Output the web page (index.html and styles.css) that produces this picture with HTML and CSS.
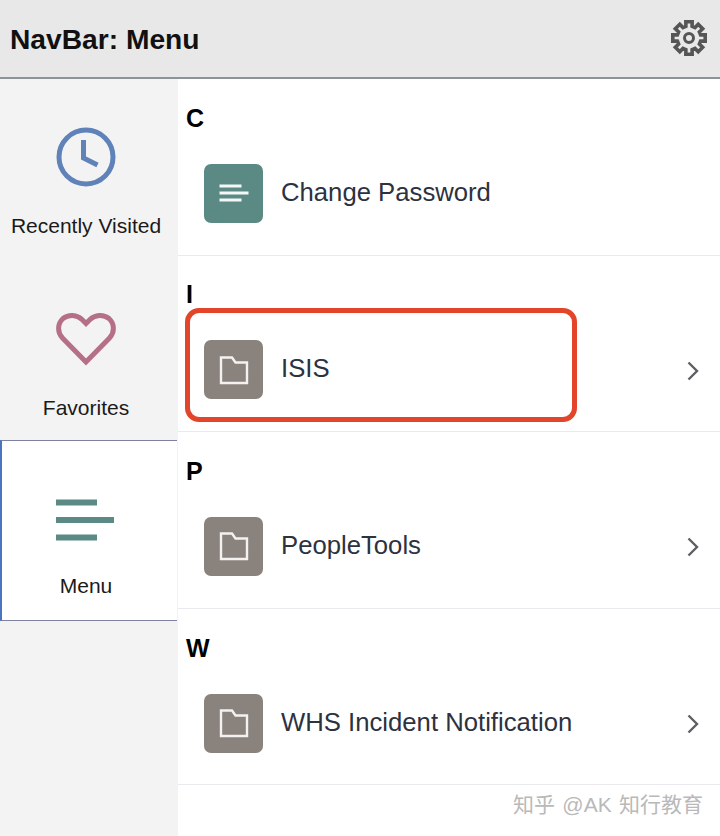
FILE: index.html
```html
<!DOCTYPE html>
<html lang="en">
<head>
<meta charset="utf-8">
<title>NavBar: Menu</title>
<link rel="stylesheet" href="styles.css">
</head>
<body>
<div class="page">
  <header class="topbar">
    <h1 class="title">NavBar: Menu</h1>
    <svg class="gear" viewBox="0 0 36 36" aria-hidden="true">
      <path class="gear-body" d="M14.89 6.41 14.85 1.8H21.15L21.11 6.41 24 7.61 27.23 4.32 31.68 8.77 28.39 12 29.59 14.89 34.2 14.85V21.15L29.59 21.11 28.39 24 31.68 27.23 27.23 31.68 24 28.39 21.11 29.59 21.15 34.2H14.85L14.89 29.59 12 28.39 8.77 31.68 4.32 27.23 7.61 24 6.41 21.11 1.8 21.15V14.85L6.41 14.89 7.61 12 4.32 8.77 8.77 4.32 12 7.61z"/>
      <circle class="gear-hole" cx="18" cy="18" r="4.500"/>
    </svg>
  </header>
  <div class="body">
    <nav class="side">
      <div class="side-item">
        <svg class="side-icon" viewBox="0 0 60 60" aria-hidden="true">
          <circle class="clock" cx="30" cy="30" r="27"/>
          <path class="clock" d="M27.500 13v18l14 7"/>
        </svg>
        <span class="side-label">Recently Visited</span>
      </div>
      <div class="side-item">
        <svg class="side-icon" viewBox="0 0 60 60" aria-hidden="true">
          <path class="heart" d="M30 52 6.500 28C1 22 1.500 13.500 7 8.500c5.500-4.500 14-4 19 1l4 4 4-4c5-5 13.500-5.500 19-1 5.500 5 6 13.500.5 19.500z"/>
        </svg>
        <span class="side-label">Favorites</span>
      </div>
      <div class="side-item is-active">
        <svg class="side-icon" viewBox="0 0 60 60" aria-hidden="true">
          <path class="bars" d="M0 12.500h41M0 30h58M0 47.500h41"/>
        </svg>
        <span class="side-label">Menu</span>
      </div>
    </nav>
    <main class="list">
      <section class="group">
        <h2 class="letter">C</h2>
        <div class="row">
          <span class="tile tile-green">
            <svg class="tile-icon" viewBox="0 0 30 30" aria-hidden="true"><path class="lines" d="M.5 8h22M.5 15h29M.5 22h22"/></svg>
          </span>
          <span class="row-text">Change Password</span>
        </div>
      </section>
      <section class="group">
        <h2 class="letter">I</h2>
        <div class="row">
          <span class="tile tile-grey">
            <svg class="tile-icon" viewBox="0 0 30 30" aria-hidden="true"><path class="folder" d="M2 2.500h11l3.500 5H28v20.500H2z"/></svg>
          </span>
          <span class="row-text">ISIS</span>
          <svg class="chev" viewBox="0 0 12 20" aria-hidden="true"><path d="M1.500 1.500 10 10l-8.500 8.500"/></svg>
        </div>
      </section>
      <section class="group">
        <h2 class="letter">P</h2>
        <div class="row">
          <span class="tile tile-grey">
            <svg class="tile-icon" viewBox="0 0 30 30" aria-hidden="true"><path class="folder" d="M2 2.500h11l3.500 5H28v20.500H2z"/></svg>
          </span>
          <span class="row-text">PeopleTools</span>
          <svg class="chev" viewBox="0 0 12 20" aria-hidden="true"><path d="M1.500 1.500 10 10l-8.500 8.500"/></svg>
        </div>
      </section>
      <section class="group">
        <h2 class="letter">W</h2>
        <div class="row">
          <span class="tile tile-grey">
            <svg class="tile-icon" viewBox="0 0 30 30" aria-hidden="true"><path class="folder" d="M2 2.500h11l3.500 5H28v20.500H2z"/></svg>
          </span>
          <span class="row-text">WHS Incident Notification</span>
          <svg class="chev" viewBox="0 0 12 20" aria-hidden="true"><path d="M1.500 1.500 10 10l-8.500 8.500"/></svg>
        </div>
      </section>
    </main>
  </div>
  <div class="highlight"></div>
  <div class="watermark">知乎 @AK 知行教育</div>
</div>
</body>
</html>
```
FILE: styles.css
```css
* { box-sizing: border-box; }
html, body { margin: 0; padding: 0; }
body {
  font-family: "Liberation Sans", Arial, "Noto Sans CJK SC", sans-serif;
  background: #fff;
}
.page {
  position: relative;
  width: 720px;
  height: 836px;
  overflow: hidden;
  display: flex;
  flex-direction: column;
}
.topbar {
  height: 79px;
  flex: none;
  display: flex;
  align-items: center;
  justify-content: space-between;
  padding: 0 13px 2px 10px;
  background: #e8e8e8;
  border-bottom: 2px solid #8b9597;
}
.title {
  margin: 4px 0 0;
  font-size: 28.200px;
  font-weight: 700;
  color: #111;
}
.gear { width: 36px; height: 36px; }
.gear-body { fill: none; stroke: #555; stroke-width: 3.600; stroke-linejoin: miter; }
.gear-hole { fill: none; stroke: #555; stroke-width: 3; }
.body { flex: 1; display: flex; min-height: 0; }
.side {
  width: 178px;
  flex: none;
  background: #f3f3f3;
  display: flex;
  flex-direction: column;
  padding-right: 1px;
}
.side-item {
  height: 180px;
  flex: none;
  display: flex;
  flex-direction: column;
  align-items: center;
  padding: 48px 5px 0 0;
  gap: 27px;
}
.side-item:nth-child(2) { height: 181px; padding-top: 51px; gap: 26px; }
.side-item.is-active {
  height: 181px;
  background: #fff;
  border-top: 1px solid #7c82a0;
  border-bottom: 1px solid #7c82a0;
  border-left: 2px solid #4a74c0;
  padding: 49px 7px 0 0;
  gap: 24px;
}
.side-icon { width: 60px; height: 60px; flex: none; }
.side-label {
  font-size: 21px;
  line-height: 24px;
  color: #1a1a1a;
}
.clock { fill: none; stroke: #5f82b8; stroke-width: 5; }
.heart { fill: none; stroke: #b57088; stroke-width: 5; }
.bars { fill: none; stroke: #5b8a85; stroke-width: 6; }
.list { flex: 1; min-width: 0; display: flex; flex-direction: column; }
.group {
  height: 176.600px;
  flex: none;
  border-bottom: 1px solid #e9e9ee;
  padding: 24.800px 0 0 8px;
}
.letter {
  margin: 0;
  font-size: 25px;
  line-height: 28px;
  font-weight: 700;
  color: #000;
}
.row {
  display: flex;
  align-items: center;
  margin-top: 32px;
  padding: 0 21px 0 18px;
}
.tile {
  width: 59px;
  height: 59px;
  flex: none;
  border-radius: 7px;
  display: flex;
  align-items: center;
  justify-content: center;
}
.tile-green { background: #5b8a85; }
.tile-grey { background: #8a827c; }
.tile-icon { width: 30px; height: 30px; }
.lines { fill: none; stroke: #f4f7f6; stroke-width: 3; }
.folder { fill: none; stroke: #f4f2f0; stroke-width: 2.400; }
.row-text {
  flex: 1;
  margin: 0 0 2px 18px;
  font-size: 25.700px;
  color: #2c3240;
}
.chev { width: 12px; height: 20px; flex: none; margin-top: 2px; }
.chev path { fill: none; stroke: #5f5f63; stroke-width: 2.400; }
.highlight {
  position: absolute;
  left: 185px;
  top: 308px;
  width: 392px;
  height: 114px;
  border: 5.500px solid #e2452a;
  border-radius: 14px;
}
.watermark {
  position: absolute;
  right: 17px;
  top: 793px;
  font-size: 21px;
  line-height: 24px;
  word-spacing: 1.500px;
  color: #b9b9b9;
}
```
